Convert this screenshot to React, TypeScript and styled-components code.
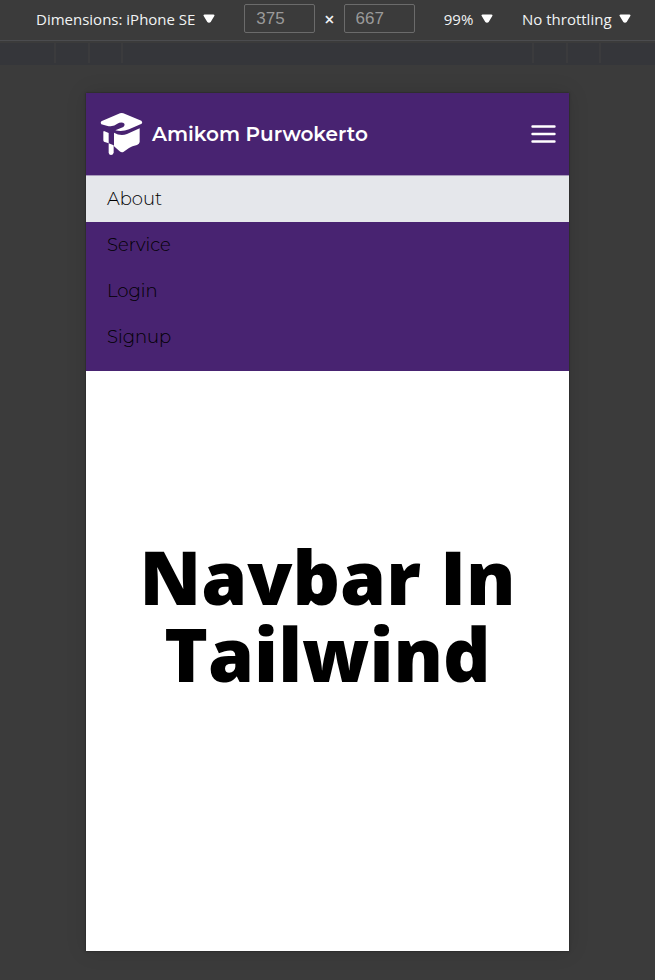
import React, { useState } from 'react';
import styled, { createGlobalStyle } from 'styled-components';

const GlobalStyle = createGlobalStyle`
  *, *::before, *::after { box-sizing: border-box; }
  body { margin: 0; background: #3b3b3b; }
  #root { display: flex; flex-direction: column; min-height: 100vh; }
`;

const Shell = styled.div`
  flex: 1;
  display: flex;
  flex-direction: column;
  background: #3b3b3b;
`;

const Toolbar = styled.div`
  display: flex;
  align-items: center;
  justify-content: space-between;
  height: 41px;
  padding: 0 24px 3px 36px;
  border-bottom: 1px solid #4b4c4f;
  color: #f1f3f4;
  font-family: 'Open Sans', 'Noto Sans', sans-serif;
  font-size: 15px;
`;

const Picker = styled.label`
  display: inline-flex;
  align-items: center;
  gap: 7px;
`;

const PickerSelect = styled.select`
  appearance: none;
  margin: 0;
  padding: 0;
  border: 0;
  background: transparent;
  color: inherit;
  font: inherit;
  line-height: 26px;
`;

const Sizes = styled.div`
  display: flex;
  align-items: center;
  gap: 9px;
`;

const Times = styled.span`
  font-size: 18px;
  font-weight: 600;
  line-height: 24px;
`;

const SizeInput = styled.input`
  width: 71px;
  height: 29px;
  padding: 0 11px;
  border: 1px solid #6b6b6b;
  border-radius: 2px;
  background: transparent;
  color: #9a9a9a;
  font-family: 'Liberation Sans', Arial, sans-serif;
  font-size: 17px;
`;

const Ruler = styled.div`
  display: flex;
  justify-content: space-between;
  height: 22px;
  margin-top: 2px;
  padding: 0 54px;
  background: #35363a;
`;

const Ticks = styled.div`
  display: flex;
  justify-content: space-between;
  width: 69px;
  height: 20px;
`;

const Tick = styled.span`
  width: 2px;
  background: #3b3b3d;
`;

const Stage = styled.div`
  flex: 1;
  display: flex;
  padding: 28px 86px 29px;
`;

const Device = styled.div`
  flex: 1;
  display: flex;
  flex-direction: column;
  background: #fff;
  box-shadow: 0 0 2px #1c1c1c, 0 0 20px rgba(0, 0, 0, 0.12);
`;

const Header = styled.header`
  background: #482371;
  font-family: Montserrat, Inter, sans-serif;
`;

const Brandbar = styled.div`
  display: flex;
  align-items: center;
  justify-content: space-between;
  height: 82px;
  padding: 0 13px 0 14px;
`;

const Brand = styled.a`
  display: flex;
  align-items: center;
  gap: 9px;
  color: #fff;
  font-size: 20px;
  font-weight: 600;
  line-height: 24px;
  text-decoration: none;
`;

const MenuButton = styled.button`
  display: flex;
  padding: 0;
  border: 0;
  background: transparent;
  color: #fff;
`;

const NavList = styled.ul`
  margin: 0;
  padding: 0 0 11px;
  border-top: 1px solid #a99bbb;
  list-style: none;
`;

const NavLink = styled.a<{ $active?: boolean }>`
  display: block;
  height: 46px;
  padding: 0 21px;
  background: ${(p) => (p.$active ? '#e5e7eb' : 'transparent')};
  color: #000;
  font-size: 18px;
  font-weight: 300;
  line-height: 46px;
  text-decoration: none;
`;

const Hero = styled.main`
  flex: 1;
  display: flex;
  align-items: center;
  justify-content: center;
  padding: 0 40px 92px;
`;

const Title = styled.h1`
  margin: 0;
  color: #000;
  font-family: 'Open Sans', 'Noto Sans', sans-serif;
  font-size: 74px;
  font-weight: 800;
  line-height: 77px;
  text-align: center;
`;

const Arrow = () => (
  <svg width="12" height="10" viewBox="0 0 12 10" aria-hidden="true">
    <path d="M1.600 0.500h8.800c1 0 1.400.8.9 1.600L7.700 7.900c-.7 1-2.700 1-3.400 0L.7 2.100C.2 1.300.6.5 1.600.5z" fill="#fff" />
  </svg>
);

const Logo = () => (
  <svg width="43" height="44" viewBox="0 0 129 132" fill="#fff" aria-hidden="true">
    <path d="M4 28L60 4q5-2 10 0l54 22q5 4 1 9l-38 17q-20 8-41 3l24-10q8-9-1-13-9-2-17 3-8 7-20 8-6 0-12-2L4 37q-4-5 0-9z" />
    <path d="M12 57l14 6v31l-14-5q-2-2-2-5V61q0-4 2-4z" />
    <path d="M42 62q20 12 39 4l38-17v41q-1 6-8 9-15 3-24 9l-17 12q-6 2-11-2L42 103z" />
    <path d="M26 94l15 6v22q-2 7-8 7t-7-7z" />
  </svg>
);

const MenuIcon = () => (
  <svg width="25" height="20" viewBox="0 0 25 20" stroke="currentColor" strokeWidth="2.4" strokeLinecap="round" aria-hidden="true">
    <path d="M1.500 2.500h22M1.500 10h22M1.500 17.500h22" />
  </svg>
);

function ToolbarPicker({ label, value }: { label: string; value: string }) {
  return (
    <Picker>
      <PickerSelect aria-label={label} defaultValue={value}>
        <option>{value}</option>
      </PickerSelect>
      <Arrow />
    </Picker>
  );
}

const TickGroup = () => (
  <Ticks><Tick /><Tick /><Tick /></Ticks>
);

const links = ['About', 'Service', 'Login', 'Signup'];

export default function App() {
  const [open, setOpen] = useState(true);
  return (
    <Shell>
      <GlobalStyle />
      <Toolbar>
        <ToolbarPicker label="Dimensions" value="Dimensions: iPhone SE" />
        <Sizes>
          <SizeInput aria-label="Width" defaultValue="375" />
          <Times>×</Times>
          <SizeInput aria-label="Height" defaultValue="667" />
        </Sizes>
        <ToolbarPicker label="Zoom" value="99%" />
        <ToolbarPicker label="Throttling" value="No throttling" />
      </Toolbar>
      <Ruler><TickGroup /><TickGroup /></Ruler>
      <Stage>
        <Device>
          <Header>
            <Brandbar>
              <Brand href="#"><Logo />Amikom Purwokerto</Brand>
              <MenuButton aria-label="Toggle menu" aria-expanded={open} onClick={() => setOpen(!open)}>
                <MenuIcon />
              </MenuButton>
            </Brandbar>
            {open && (
              <nav>
                <NavList>
                  {links.map((link, i) => (
                    <li key={link}><NavLink href="#" $active={i === 0}>{link}</NavLink></li>
                  ))}
                </NavList>
              </nav>
            )}
          </Header>
          <Hero><Title>Navbar In Tailwind</Title></Hero>
        </Device>
      </Stage>
    </Shell>
  );
}
